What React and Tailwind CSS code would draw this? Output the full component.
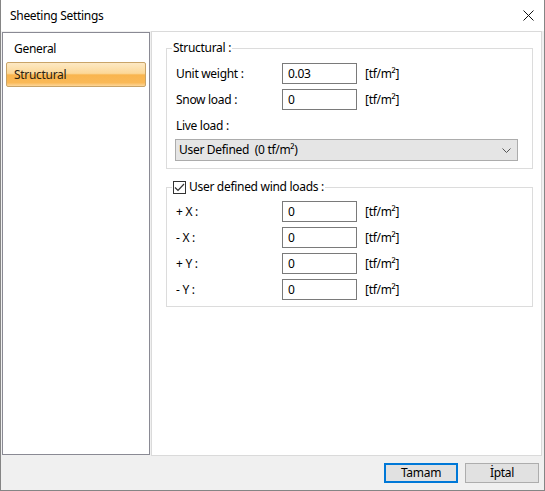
import React from "react";

const font = { fontFamily: '"Noto Sans", "Segoe UI", sans-serif' };

function Field({ label, value }) {
  return (
    <div className="flex items-center h-[21px]">
      <span className="w-[107px] pl-[1px]">{label}</span>
      <div className="w-[75px] h-[21px] border border-[#7a7a7a] bg-white flex items-center pl-[5px]">
        {value}
      </div>
      <span className="ml-[8px]">[tf/m²]</span>
    </div>
  );
}

export default function App() {
  return (
    <div
      className="w-[545px] h-[491px] flex flex-col bg-[#f0f0f0] border-x border-b border-[#858585] text-[12px] leading-4 tracking-[-0.3px] text-black"
      style={font}
    >
      <div className="h-[31px] bg-white flex items-center justify-between pl-[9px] pr-[10px]">
        <span>Sheeting Settings</span>
        <svg width="11" height="11" viewBox="0 0 11 11">
          <path d="M0.5 0.5 L10.5 10.5 M10.5 0.5 L0.5 10.5" stroke="#111" strokeWidth="1" />
        </svg>
      </div>

      <div className="flex h-[425px]">
        <div className="ml-[1px] mt-[1px] w-[148px] h-[423px] bg-white border border-[#8a8a94] pt-[3px] px-[3px] flex flex-col gap-[1px]">
          <div className="h-[25px] flex items-center pl-[8px]">General</div>
          <div className="h-[25px] flex items-center pl-[7px] rounded-[2px] border border-[#c9a468] text-[#2a2010] bg-[linear-gradient(to_bottom,#fde9c4_0%,#fcd898_45%,#f9b54e_52%,#fab957_85%,#fcd69a_100%)]">
            Structural
          </div>
        </div>

        <div className="ml-[1px] w-[391px] h-[425px] bg-white border border-[#dadada] pt-[8px]">
          <fieldset className="ml-[14px] w-[367px] border border-[#dcdcdc] pl-[5px] pr-0 pb-0">
            <legend className="px-[1px]">Structural :</legend>
            <div className="pl-[3px] pt-[7px] pb-[7px]">
              <div className="flex flex-col gap-[5px]">
                <Field label="Unit weight :" value="0.03" />
                <Field label="Snow load :" value="0" />
                <div className="h-[21px] flex items-center pl-[1px]">Live load :</div>
              </div>
              <div className="mt-[3px] w-[343px] h-[22px] bg-[#e5e5e5] border border-[#acacac] flex items-center justify-between pl-[3px] pr-[6px]">
                <span className="whitespace-pre">User Defined  (0 tf/m²)</span>
                <svg width="9" height="5" viewBox="0 0 9 5">
                  <path d="M0.5 0.5 L4.5 4.5 L8.5 0.5" fill="none" stroke="#555" strokeWidth="1" />
                </svg>
              </div>
            </div>
          </fieldset>

          <fieldset className="mt-[10px] ml-[14px] w-[367px] border border-[#dcdcdc] pl-[5px] pr-0 pb-0">
            <legend className="px-[1px] flex items-center gap-[3px]">
              <span className="w-[13px] h-[13px] border border-[#333] bg-white flex items-center justify-center">
                <svg width="11" height="9" viewBox="0 0 11 9">
                  <path d="M1 4.5 L4 7.5 L10 1" fill="none" stroke="#333" strokeWidth="1.2" />
                </svg>
              </span>
              <span>User defined wind loads :</span>
            </legend>
            <div className="pl-[3px] pt-[6px] pb-[6px] flex flex-col gap-[5px]">
              <Field label="+ X :" value="0" />
              <Field label="- X :" value="0" />
              <Field label="+ Y :" value="0" />
              <Field label="- Y :" value="0" />
            </div>
          </fieldset>
        </div>
      </div>

      <div className="flex-1 flex justify-end items-start pt-[7px] pr-[5px] gap-[7px]">
        <button className="w-[74px] h-[20px] border-2 border-[#0078d7] bg-[#e1e1e1] flex items-center justify-center">
          Tamam
        </button>
        <button className="w-[74px] h-[20px] border border-[#adadad] bg-[#e1e1e1] flex items-center justify-center">
          İptal
        </button>
      </div>
    </div>
  );
}
